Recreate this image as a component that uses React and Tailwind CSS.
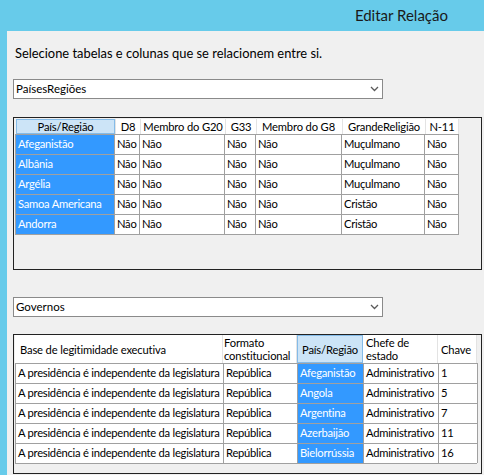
import React from "react";

const rows1 = [
  ["Afeganistão", "Muçulmano"],
  ["Albânia", "Muçulmano"],
  ["Argélia", "Muçulmano"],
  ["Samoa Americana", "Cristão"],
  ["Andorra", "Cristão"],
];

const rows2 = [
  ["Afeganistão", "1"],
  ["Angola", "5"],
  ["Argentina", "7"],
  ["Azerbaijão", "11"],
  ["Bielorrússia", "16"],
];

const cols1 = "grid grid-cols-[99px_25px_85px_31px_86px_83px_34px]";
const cols2 = "grid grid-cols-[208px_74px_66px_75px_39px]";

function Chevron() {
  return (
    <svg width="9" height="6" viewBox="0 0 9 6" className="shrink-0">
      <path d="M1 1 L4.5 4.5 L8 1" fill="none" stroke="#5a5a5a" strokeWidth="1.3" />
    </svg>
  );
}

function Combo({ value }) {
  return (
    <div className="w-[370px] h-[20px] bg-white border border-[#8a8a8a] flex items-center pl-[2px] pr-[3px]">
      <span className="flex-1 text-[11.5px] leading-none">{value}</span>
      <Chevron />
    </div>
  );
}

function Cell({ children, blue, className = "" }) {
  return (
    <div
      className={`h-[20px] border-r border-t border-[#a0a0a0] pl-[2px] flex items-center whitespace-nowrap overflow-hidden text-[11.2px] tracking-[-0.25px] ${
        blue ? "bg-[#3399ff] text-white" : "bg-white text-black"
      } ${className}`}
    >
      {children}
    </div>
  );
}

export default function App() {
  return (
    <div className="w-[484px] h-[475px] overflow-hidden bg-[#67cbea] flex flex-col font-['Lato',sans-serif] text-black">
      <div className="h-[31px] shrink-0 flex items-center justify-end pr-[36px] text-[15px] text-[#1a1a1a]">
        Editar Relação
      </div>

      <div className="flex-1 ml-[7px] bg-[#f0f0f0] pl-[6px] flex flex-col">
        <p className="mt-[13px] pl-[2px] h-[18px] leading-[18px] text-[12.9px]">
          Selecione tabelas e colunas que se relacionem entre si.
        </p>

        <div className="mt-[17px]">
          <Combo value="PaísesRegiões" />
        </div>

        {/* first grid */}
        <div className="mt-[18px] w-[469px] h-[153px] border border-[#222] bg-[#f0f0f0] pt-px pl-px">
          <div className={`${cols1} h-[15px] text-[11.2px] tracking-[-0.15px] ml-px whitespace-nowrap`}>
            <div className="bg-[#cce4f7] border border-[#84bbe8] flex items-center justify-center leading-none">País/Região</div>
            <div className="bg-white border-l border-[#e3e3e3] flex items-center justify-center leading-none">D8</div>
            <div className="bg-white border-l border-[#e3e3e3] flex items-center justify-center leading-none">Membro do G20</div>
            <div className="bg-white border-l border-[#e3e3e3] flex items-center justify-center leading-none">G33</div>
            <div className="bg-white border-l border-[#e3e3e3] flex items-center pl-[5px] leading-none">Membro do G8</div>
            <div className="bg-white border-l border-[#e3e3e3] flex items-center justify-center leading-none">GrandeReligião</div>
            <div className="bg-white border-l border-r border-[#e3e3e3] flex items-center justify-center leading-none">N-11</div>
          </div>
          <div className="w-[444px] border-l border-b border-[#a0a0a0]">
            {rows1.map(([country, religion]) => (
              <div key={country} className={cols1}>
                <Cell blue>{country}</Cell>
                <Cell>Não</Cell>
                <Cell>Não</Cell>
                <Cell>Não</Cell>
                <Cell>Não</Cell>
                <Cell>{religion}</Cell>
                <Cell>Não</Cell>
              </div>
            ))}
          </div>
        </div>

        <div className="mt-[27px]">
          <Combo value="Governos" />
        </div>

        {/* second grid */}
        <div className="mt-[17px] w-[469px] h-[140px] border border-[#222] bg-[#f0f0f0] pl-px">
          <div className={`${cols2} h-[28px] text-[11.2px] tracking-[-0.15px] leading-[13px] whitespace-nowrap`}>
            <div className="bg-white border-r border-[#e3e3e3] flex items-center pl-[5px]">Base de legitimidade executiva</div>
            <div className="bg-white border-r border-[#e3e3e3] flex items-center pl-[1px]">
              Formato
              <br />
              constitucional
            </div>
            <div className="bg-[#cce4f7] border border-[#84bbe8] flex items-center pl-[4px]">País/Região</div>
            <div className="bg-white border-r border-[#e3e3e3] flex items-center pl-[3px]">
              Chefe de
              <br />
              estado
            </div>
            <div className="bg-white border-r border-[#e3e3e3] flex items-center pl-[3px]">Chave</div>
          </div>
          <div className="w-[462px] border-l border-b border-[#a0a0a0]">
            {rows2.map(([country, key]) => (
              <div key={country} className={cols2}>
                <Cell>A presidência é independente da legislatura</Cell>
                <Cell>República</Cell>
                <Cell blue>{country}</Cell>
                <Cell>Administrativo</Cell>
                <Cell>{key}</Cell>
              </div>
            ))}
          </div>
        </div>
      </div>
    </div>
  );
}
